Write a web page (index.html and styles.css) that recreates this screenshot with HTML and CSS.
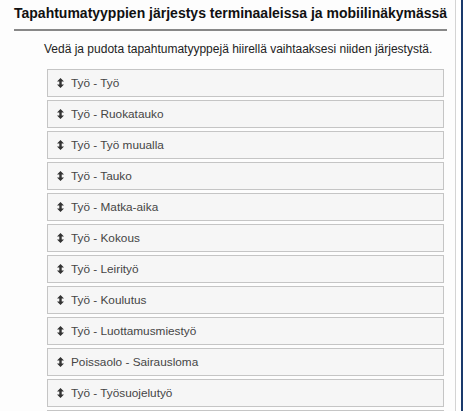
FILE: index.html
```html
<!DOCTYPE html>
<html lang="fi">

<head>
    <meta charset="UTF-8">
    <meta name="viewport" content="width=device-width, initial-scale=1.0">
    <title>Tapahtumatyyppien järjestys</title>
    <link rel="stylesheet" href="styles.css">
</head>

<body>

    <div class="page">
        <div class="panel">
            <h3 class="panel-title">Tapahtumatyyppien järjestys terminaaleissa ja mobiilinäkymässä</h3>

            <p class="hint">Vedä ja pudota tapahtumatyyppejä hiirellä vaihtaaksesi niiden järjestystä.</p>

            <ul class="sortable">
                <li><span class="handle"><svg width="7" height="10" viewBox="0 0 7 10"><path d="M3.5 0 L7 3.4 H4.7 V6.6 H7 L3.5 10 L0 6.6 H2.3 V3.4 H0 Z" fill="#333"/></svg></span>Työ - Työ</li>
                <li><span class="handle"><svg width="7" height="10" viewBox="0 0 7 10"><path d="M3.5 0 L7 3.4 H4.7 V6.6 H7 L3.5 10 L0 6.6 H2.3 V3.4 H0 Z" fill="#333"/></svg></span>Työ - Ruokatauko</li>
                <li><span class="handle"><svg width="7" height="10" viewBox="0 0 7 10"><path d="M3.5 0 L7 3.4 H4.7 V6.6 H7 L3.5 10 L0 6.6 H2.3 V3.4 H0 Z" fill="#333"/></svg></span>Työ - Työ muualla</li>
                <li><span class="handle"><svg width="7" height="10" viewBox="0 0 7 10"><path d="M3.5 0 L7 3.4 H4.7 V6.6 H7 L3.5 10 L0 6.6 H2.3 V3.4 H0 Z" fill="#333"/></svg></span>Työ - Tauko</li>
                <li><span class="handle"><svg width="7" height="10" viewBox="0 0 7 10"><path d="M3.5 0 L7 3.4 H4.7 V6.6 H7 L3.5 10 L0 6.6 H2.3 V3.4 H0 Z" fill="#333"/></svg></span>Työ - Matka-aika</li>
                <li><span class="handle"><svg width="7" height="10" viewBox="0 0 7 10"><path d="M3.5 0 L7 3.4 H4.7 V6.6 H7 L3.5 10 L0 6.6 H2.3 V3.4 H0 Z" fill="#333"/></svg></span>Työ - Kokous</li>
                <li><span class="handle"><svg width="7" height="10" viewBox="0 0 7 10"><path d="M3.5 0 L7 3.4 H4.7 V6.6 H7 L3.5 10 L0 6.6 H2.3 V3.4 H0 Z" fill="#333"/></svg></span>Työ - Leirityö</li>
                <li><span class="handle"><svg width="7" height="10" viewBox="0 0 7 10"><path d="M3.5 0 L7 3.4 H4.7 V6.6 H7 L3.5 10 L0 6.6 H2.3 V3.4 H0 Z" fill="#333"/></svg></span>Työ - Koulutus</li>
                <li><span class="handle"><svg width="7" height="10" viewBox="0 0 7 10"><path d="M3.5 0 L7 3.4 H4.7 V6.6 H7 L3.5 10 L0 6.6 H2.3 V3.4 H0 Z" fill="#333"/></svg></span>Työ - Luottamusmiestyö</li>
                <li><span class="handle"><svg width="7" height="10" viewBox="0 0 7 10"><path d="M3.5 0 L7 3.4 H4.7 V6.6 H7 L3.5 10 L0 6.6 H2.3 V3.4 H0 Z" fill="#333"/></svg></span>Poissaolo - Sairausloma</li>
                <li><span class="handle"><svg width="7" height="10" viewBox="0 0 7 10"><path d="M3.5 0 L7 3.4 H4.7 V6.6 H7 L3.5 10 L0 6.6 H2.3 V3.4 H0 Z" fill="#333"/></svg></span>Työ - Työsuojelutyö</li>
                <li class="partial"></li>
            </ul>
        </div>
        <div class="edge"></div>
    </div>

</body>

</html>
```

FILE: styles.css
```css
body {
    font-family: 'Liberation Sans', Arial, sans-serif;
    background-color: #ffffff;
    margin: 0;
    padding: 0;
    overflow: hidden;
}

.page {
    display: flex;
    height: 100vh;
}

/* Main panel with the sortable list */
.panel {
    width: 456px;
    flex: none;
    background-color: #fdfdfd;
    border-right: 1px solid #d4d4d4;
    box-sizing: border-box;
}

.edge {
    margin-left: 5px;
    border-left: 2px solid #1a3a6c;
}

.panel-title {
    margin: 0 8px 0 14px;
    padding: 5px 0 0 0;
    height: 24px;
    font-size: 14px;
    line-height: 17px;
    font-weight: bold;
    white-space: nowrap;
    color: #111;
    border-bottom: 2px solid #888;
}

.hint {
    margin: 11px 0 13px 44px;
    font-size: 12px;
    line-height: 14px;
    white-space: nowrap;
    color: #222;
}

.sortable {
    list-style: none;
    margin: 0 0 0 47px;
    padding: 0;
    width: 397px;
}

.sortable li {
    display: flex;
    align-items: center;
    height: 28px;
    box-sizing: border-box;
    margin-bottom: 3px;
    padding-left: 9px;
    border: 1px solid #c5c5c5;
    background-color: #f6f6f6;
    color: #454545;
    font-size: 11.8px;
}

.handle {
    display: flex;
    width: 14px;
}
```
